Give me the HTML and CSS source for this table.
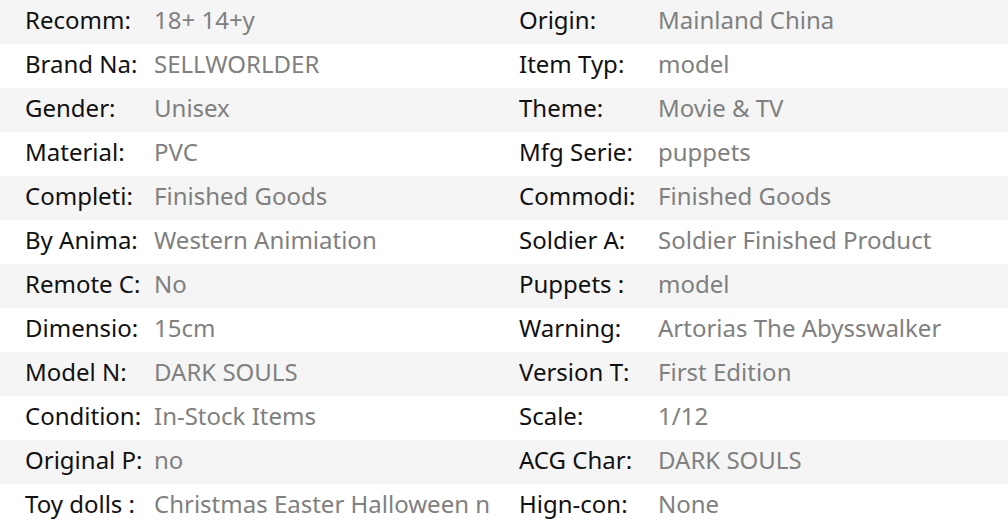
FILE: index.html
```html
<!DOCTYPE html>
<html>
<head>
<meta charset="utf-8">
<link rel="stylesheet" href="styles.css">
</head>
<body>
<div class="specs">
  <div class="row"><span class="k">Recomm:</span><span class="v">18+ 14+y</span><span class="k">Origin:</span><span class="v">Mainland China</span></div>
  <div class="row"><span class="k">Brand Na:</span><span class="v">SELLWORLDER</span><span class="k">Item Typ:</span><span class="v">model</span></div>
  <div class="row"><span class="k">Gender:</span><span class="v">Unisex</span><span class="k">Theme:</span><span class="v">Movie &amp; TV</span></div>
  <div class="row"><span class="k">Material:</span><span class="v">PVC</span><span class="k">Mfg Serie:</span><span class="v">puppets</span></div>
  <div class="row"><span class="k">Completi:</span><span class="v">Finished Goods</span><span class="k">Commodi:</span><span class="v">Finished Goods</span></div>
  <div class="row"><span class="k">By Anima:</span><span class="v">Western Animiation</span><span class="k">Soldier A:</span><span class="v">Soldier Finished Product</span></div>
  <div class="row"><span class="k">Remote C:</span><span class="v">No</span><span class="k">Puppets :</span><span class="v">model</span></div>
  <div class="row"><span class="k">Dimensio:</span><span class="v">15cm</span><span class="k">Warning:</span><span class="v">Artorias The Abysswalker</span></div>
  <div class="row"><span class="k">Model N:</span><span class="v">DARK SOULS</span><span class="k">Version T:</span><span class="v">First Edition</span></div>
  <div class="row"><span class="k">Condition:</span><span class="v">In-Stock Items</span><span class="k">Scale:</span><span class="v">1/12</span></div>
  <div class="row"><span class="k">Original P:</span><span class="v">no</span><span class="k">ACG Char:</span><span class="v">DARK SOULS</span></div>
  <div class="row"><span class="k">Toy dolls :</span><span class="v">Christmas Easter Halloween n</span><span class="k">Hign-con:</span><span class="v">None</span></div>
</div>
</body>
</html>
```

FILE: styles.css
```css
html, body {
  margin: 0;
  padding: 0;
  background: #ffffff;
}
.specs {
  width: 1008px;
  font-family: "Noto Sans", "Open Sans", sans-serif;
  font-size: 24px;
}
.row {
  display: grid;
  grid-template-columns: 154px 340px 164px 1fr;
  height: 44px;
  line-height: 40px;
  background: #ffffff;
}
.row:nth-child(odd) {
  background: #f5f5f5;
}
.k {
  padding-left: 25px;
  color: #111111;
  white-space: nowrap;
  overflow: hidden;
}
.v {
  color: #808080;
  white-space: nowrap;
  overflow: hidden;
}
```
